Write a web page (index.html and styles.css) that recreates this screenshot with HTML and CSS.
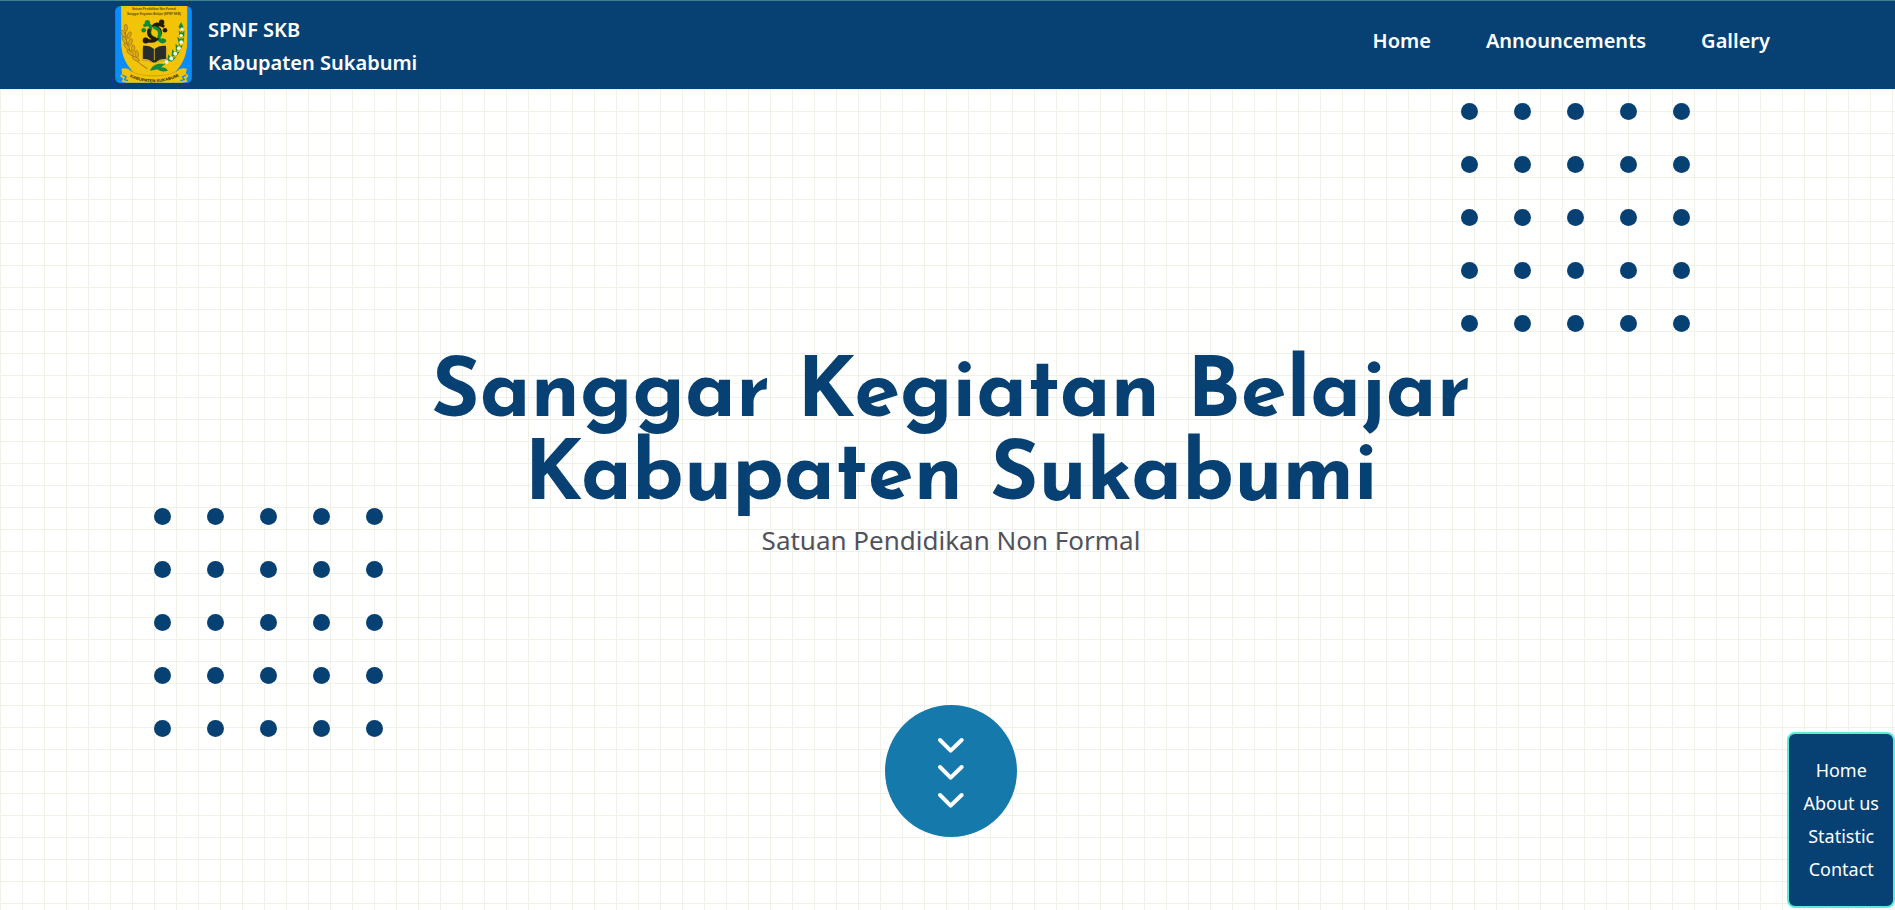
FILE: index.html
```html
<!DOCTYPE html>
<html lang="id">
<head>
<meta charset="utf-8">
<meta name="viewport" content="width=device-width, initial-scale=1">
<title>SPNF SKB Kabupaten Sukabumi</title>
<link rel="stylesheet" href="styles.css">
</head>
<body>
<header class="topbar">
  <a class="brand" href="#home">
    <svg class="brand-logo" viewBox="15 18 231 232" aria-hidden="true">
      <defs>
        <path id="ribbon" d="M52 229Q132 268 214 227"/>
      </defs>
      <rect x="15" y="18" width="231" height="232" rx="16" fill="#098dfc"/>
      <path d="M33 18H232V125C232 170 215 200 185 228H80C50 200 33 170 33 125Z" fill="#f2c307"/>
      <path d="M34 207C46 203 57 206 62 214C100 234 164 234 202 214C208 206 220 203 231 207L228 220L236 228L229 238L233 246L216 249H48L34 246L39 237L30 230L36 221Z" fill="#f2c307"/>
      <path d="M62 214C100 234 164 234 202 214" fill="none" stroke="#c99c0c" stroke-width="2"/>
      <path d="M37 226L48 231L43 240L54 243M229 226L218 231L223 240L212 243" fill="none" stroke="#098dfc" stroke-width="4"/>
      <g font-family="Liberation Sans, sans-serif" font-weight="700" fill="#5e4a09" text-anchor="middle">
        <text x="132" y="31" font-size="9">Satuan Pendidikan Non Formal</text>
        <text x="132" y="44" font-size="9">Sanggar Kegiatan Belajar (SPNF SKB)</text>
        <text font-size="13" fill="#2c230a"><textPath href="#ribbon" startOffset="50%">KABUPATEN SUKABUMI</textPath></text>
      </g>
      <g fill="none" stroke-width="10" stroke-linecap="round">
        <path d="M104 76C117 70 126 78 120 91C116 102 123 113 134 115" stroke="#0c8d35"/>
        <path d="M159 78C146 70 134 73 132 77C146 83 153 93 150 105" stroke="#231c0b"/>
        <path d="M164 123C153 128 143 120 148 108C152 96 145 85 134 83" stroke="#0c8d35"/>
        <path d="M105 119C119 127 133 124 138 119C122 116 113 104 117 91" stroke="#231c0b"/>
      </g>
      <g fill="#231c0b"><circle cx="155" cy="67" r="8"/><circle cx="107" cy="122" r="9"/><circle cx="165" cy="91" r="7"/></g>
      <g fill="#0c8d35"><circle cx="112" cy="68" r="8"/><circle cx="158" cy="123" r="8"/><circle cx="101" cy="91" r="7"/></g>
      <path d="M99 138Q119 136 133 148Q147 136 168 138V178Q149 177 137 188H128Q117 177 99 178Z" fill="#272c2d"/>
      <path d="M133 148V181M97 144V182Q117 181 129 189M170 144V182Q149 181 137 189" fill="none" stroke="#c6a126" stroke-width="3"/>
      <path d="M47 73C42 132 62 178 112 207" fill="none" stroke="#98731b" stroke-width="3"/>
      <g fill="#dca817" stroke="#98731b" stroke-width="2">
        <ellipse cx="47" cy="84" rx="5" ry="11"/><ellipse cx="39" cy="101" rx="5" ry="11" transform="rotate(-25 39 101)"/>
        <ellipse cx="57" cy="106" rx="5" ry="11" transform="rotate(22 57 106)"/><ellipse cx="43" cy="120" rx="5" ry="12" transform="rotate(-30 43 120)"/>
        <ellipse cx="61" cy="127" rx="5" ry="11" transform="rotate(15 61 127)"/><ellipse cx="50" cy="140" rx="5" ry="12" transform="rotate(-40 50 140)"/>
        <ellipse cx="69" cy="146" rx="5" ry="11" transform="rotate(5 69 146)"/><ellipse cx="60" cy="159" rx="5" ry="12" transform="rotate(-50 60 159)"/>
        <ellipse cx="80" cy="163" rx="5" ry="11" transform="rotate(-8 80 163)"/><ellipse cx="77" cy="177" rx="5" ry="12" transform="rotate(-60 77 177)"/>
      </g>
      <path d="M214 76C222 132 194 181 140 208" fill="none" stroke="#18853a" stroke-width="3"/>
      <g fill="#168b3b">
        <path d="M214 66L221 82L211 90L206 80Z"/><path d="M206 91L215 101L224 92L223 110L209 111Z"/><path d="M202 111L213 120L223 112L220 130L207 132Z"/><path d="M197 132L207 141L219 135L211 151L198 151Z"/><path d="M187 148L196 159L210 155L199 170L185 168Z"/><path d="M175 164L184 173L199 173L184 186L172 181Z"/><path d="M120 213C126 195 144 189 161 193C153 207 139 211 120 213Z"/><path d="M140 207C152 199 167 202 174 212C161 218 151 215 140 207Z"/>
      </g>
      <g fill="#f5f3dd"><circle cx="216" cy="88" r="5"/><circle cx="214" cy="107" r="5"/><circle cx="214" cy="127" r="6"/><circle cx="207" cy="145" r="6"/><circle cx="196" cy="162" r="6"/><circle cx="184" cy="176" r="6"/><circle cx="170" cy="187" r="6"/></g>
    </svg>
    <span class="brand-name">SPNF SKB<br>Kabupaten Sukabumi</span>
  </a>
  <nav class="main-nav" aria-label="Main">
    <a href="#home">Home</a>
    <a href="#announcements">Announcements</a>
    <a href="#gallery">Gallery</a>
  </nav>
</header>

<main class="hero" id="home">
  <svg class="dots dots-right" viewBox="0 0 229 229" aria-hidden="true">
    <defs>
      <g id="dot-row"><circle cx="8.500" cy="8.500" r="8.500"/><circle cx="61.500" cy="8.500" r="8.500"/><circle cx="114.500" cy="8.500" r="8.500"/><circle cx="167.500" cy="8.500" r="8.500"/><circle cx="220.500" cy="8.500" r="8.500"/></g>
    </defs>
    <use href="#dot-row"/><use href="#dot-row" y="53"/><use href="#dot-row" y="106"/><use href="#dot-row" y="159"/><use href="#dot-row" y="212"/>
  </svg>
  <svg class="dots dots-left" viewBox="0 0 229 229" aria-hidden="true">
    <use href="#dot-row"/><use href="#dot-row" y="53"/><use href="#dot-row" y="106"/><use href="#dot-row" y="159"/><use href="#dot-row" y="212"/>
  </svg>
  <div class="hero-content">
    <h1 class="hero-title">Sanggar Kegiatan Belajar<br>Kabupaten Sukabumi</h1>
    <p class="hero-subtitle">Satuan Pendidikan Non Formal</p>
    <a class="scroll-down" href="#about" aria-label="Scroll down">
      <svg viewBox="45 44 396 396" aria-hidden="true">
        <g fill="none" stroke="#fff" stroke-width="12" stroke-linecap="round" stroke-linejoin="round">
          <path d="M210 149L242 181L275 149"/><path d="M210 230L242 262L275 230"/><path d="M210 314L242 346L275 314"/>
        </g>
      </svg>
    </a>
  </div>
</main>

<nav class="side-nav" aria-label="Sections">
  <a href="#home">Home</a>
  <a href="#about">About us</a>
  <a href="#statistic">Statistic</a>
  <a href="#contact">Contact</a>
</nav>
</body>
</html>
```
FILE: styles.css
```css
:root {
  --navy: #074173;
  --blue: #1679ab;
  --mint: #5eead4;
  --grid-line: #f0f1e9;
}

* {
  box-sizing: border-box;
}

body {
  min-height: 100vh;
  margin: 0;
  display: flex;
  flex-direction: column;
  font-family: "Segoe UI", "Noto Sans", sans-serif;
}

a {
  color: inherit;
  text-decoration: none;
}

.topbar {
  display: flex;
  justify-content: space-between;
  align-items: center;
  padding: 5px 125px 6px 115px;
  border-top: 1px solid #40828a;
  background: var(--navy);
  color: #fff;
  font-size: 20px;
  font-weight: 600;
  line-height: 33px;
}

.brand {
  display: flex;
  align-items: center;
  gap: 16px;
}

.brand-logo {
  display: block;
  width: 77px;
  height: 77px;
}

.brand-name {
  padding-top: 2px;
}

.main-nav {
  display: flex;
  gap: 55px;
  padding-bottom: 8px;
}

.hero {
  flex: 1;
  display: grid;
  background-color: #fff;
  background-image:
    linear-gradient(to right, var(--grid-line) 1px, transparent 1px),
    linear-gradient(to bottom, var(--grid-line) 1px, transparent 1px);
  background-size: 22px 22px;
}

.hero > * {
  grid-area: 1 / 1;
}

.dots {
  width: 229px;
  height: 229px;
  fill: var(--navy);
}

.dots-right {
  justify-self: end;
  margin: 14px 205px 0 0;
}

.dots-left {
  align-self: end;
  margin: 0 0 173px 154px;
}

.hero-content {
  display: flex;
  flex-direction: column;
  align-items: center;
  justify-content: end;
  padding: 0 0 73px 7px;
  text-align: center;
}

.hero-title {
  margin: 0;
  color: var(--navy);
  font-family: "Josefin Sans", Lato, sans-serif;
  font-size: 83px;
  font-weight: 700;
  line-height: 83px;
}

.hero-subtitle {
  margin: 0 0 145px;
  color: #52525b;
  font-size: 26px;
  line-height: 40px;
}

.scroll-down {
  width: 132px;
  height: 132px;
  border-radius: 50%;
  background: var(--blue);
}

.scroll-down svg {
  display: block;
}

.side-nav {
  position: fixed;
  right: 0;
  bottom: 2px;
  display: flex;
  flex-direction: column;
  padding: 20px 14px;
  border: 2px solid var(--mint);
  border-radius: 8px;
  background: var(--navy);
  color: #fff;
  font-size: 18px;
  line-height: 33px;
  text-align: center;
}
```
